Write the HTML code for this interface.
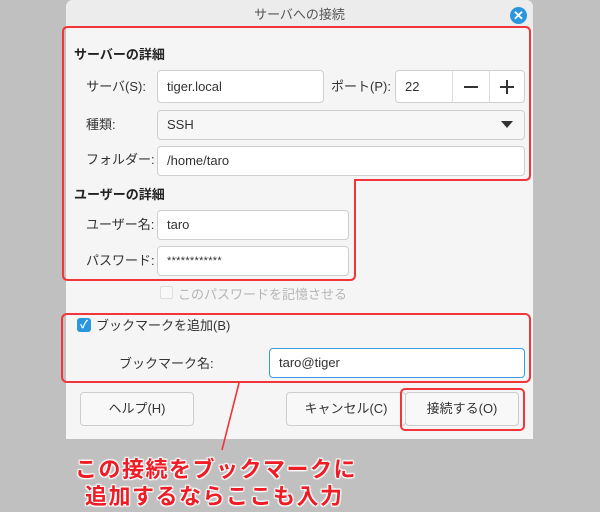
<!DOCTYPE html>
<html><head><meta charset="utf-8"><style>
*{box-sizing:border-box;margin:0;padding:0}
body{width:600px;height:512px;background:#c0c0c0;position:relative;overflow:hidden;font-family:"Liberation Sans","Noto Sans CJK JP",sans-serif;font-size:13px;color:#333}
.a{position:absolute}
.dlg{left:66px;top:0;width:467px;height:439px;background:#f5f5f5;border-radius:7px 7px 0 0}
.tb{left:66px;top:0;width:467px;height:28px;background:#ececec;border-radius:7px 7px 0 0;text-align:center;line-height:30px;color:#555;font-size:13px}
.in{background:#fff;border:1px solid #cfcfcf;border-radius:4px;padding-left:9px;line-height:28px;color:#333}
.lb{text-align:right;color:#333}
.h{font-weight:bold;color:#222}
.btn{background:#f8f8f8;border:1px solid #cdcdcd;border-radius:4px;text-align:center;line-height:31px;color:#333}
.rt{color:#ee1c25;font-size:22px;font-weight:bold;text-shadow:0 0 2px #fff,0 0 2px #fff,1px 1px 1px #fff,-1px -1px 1px #fff,1px -1px 1px #fff,-1px 1px 1px #fff;white-space:nowrap;letter-spacing:1.5px}
</style></head><body>
<div class="a dlg"></div>
<div class="a tb">サーバへの接続</div>
<div class="a" style="left:510px;top:7px;width:17px;height:17px;border-radius:50%;background:#2a96dd;color:#fff;text-align:center;line-height:17px;font-size:13px;font-weight:bold">✕</div>

<div class="a h" style="left:74px;top:44px">サーバーの詳細</div>
<div class="a lb" style="left:70px;width:76px;top:76px">サーバ(S):</div>
<div class="a in" style="left:157px;top:70px;width:167px;height:33px;line-height:31px">tiger.local</div>
<div class="a" style="left:331px;top:76px">ポート(P):</div>
<div class="a in" style="left:395px;top:70px;width:130px;height:33px;line-height:31px">22</div>
<div class="a" style="left:452px;top:71px;width:1px;height:31px;background:#ddd"></div>
<div class="a" style="left:489px;top:71px;width:1px;height:31px;background:#ddd"></div>
<div class="a" style="left:464px;top:86px;width:14px;height:2px;background:#333"></div>
<div class="a" style="left:500px;top:86px;width:14px;height:2px;background:#333"></div>
<div class="a" style="left:506px;top:80px;width:2px;height:14px;background:#333"></div>

<div class="a" style="left:86px;top:114px">種類:</div>
<div class="a in" style="left:157px;top:110px;width:368px;height:30px;background:#f7f7f7">SSH</div>
<div class="a" style="left:501px;top:121px;width:0;height:0;border-left:6px solid transparent;border-right:6px solid transparent;border-top:7px solid #333"></div>

<div class="a" style="left:86px;top:149px">フォルダー:</div>
<div class="a in" style="left:157px;top:146px;width:368px;height:30px">/home/taro</div>

<div class="a h" style="left:74px;top:184px">ユーザーの詳細</div>
<div class="a" style="left:86px;top:214px">ユーザー名:</div>
<div class="a in" style="left:157px;top:210px;width:192px;height:30px">taro</div>
<div class="a" style="left:86px;top:250px">パスワード:</div>
<div class="a in" style="left:157px;top:246px;width:192px;height:30px;font-size:11px;letter-spacing:0.3px">************</div>

<div class="a" style="left:160px;top:286px;width:13px;height:13px;border:1px solid #ddd;border-radius:2px;background:#f8f8f8"></div>
<div class="a" style="left:178px;top:284px;color:#b5b5b5">このパスワードを記憶させる</div>

<div class="a" style="left:77px;top:318px;width:14px;height:14px;border-radius:3px;background:#2a96dd;color:#fff;font-size:11px;line-height:14px;text-align:center;font-weight:bold">✓</div>
<div class="a" style="left:96px;top:315px">ブックマークを追加(B)</div>
<div class="a" style="left:119px;top:353px">ブックマーク名:</div>
<div class="a in" style="left:269px;top:348px;width:256px;height:30px;border-color:#3b9bde">taro@tiger</div>

<div class="a btn" style="left:80px;top:392px;width:114px;height:34px">ヘルプ(H)</div>
<div class="a btn" style="left:286px;top:392px;width:120px;height:34px">キャンセル(C)</div>
<div class="a btn" style="left:405px;top:392px;width:114px;height:34px">接続する(O)</div>

<svg class="a" style="left:0;top:0" width="600" height="512">
<path d="M68 27 H525 Q530 27 530 32 V175 Q530 180 525 180 H355 V275 Q355 280 350 280 H68 Q63 280 63 275 V32 Q63 27 68 27 Z" fill="none" stroke="#f2353a" stroke-width="2"/>
<rect x="62" y="314" width="468" height="68" rx="5" fill="none" stroke="#f2353a" stroke-width="2"/>
<rect x="401" y="389" width="123" height="41" rx="4" fill="none" stroke="#f2353a" stroke-width="2"/>
<line x1="239" y1="383" x2="222" y2="450" stroke="#f2353a" stroke-width="1.6"/>
</svg>

<div class="a rt" style="left:75px;top:452px">この接続をブックマークに</div>
<div class="a rt" style="left:85px;top:479px">追加するならここも入力</div>
</body></html>
